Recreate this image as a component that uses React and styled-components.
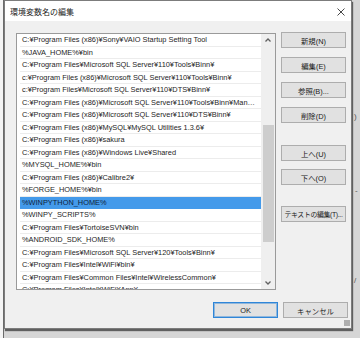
import React from "react";
import styled, { createGlobalStyle } from "styled-components";

const Global = createGlobalStyle`
  html, body { margin: 0; padding: 0; }
  body { background: #e4e4e4; font-family: "Liberation Sans", "Noto Sans CJK JP", sans-serif; }
`;

const Desktop = styled.div`
  position: relative;
  width: 360px;
  height: 338px;
  overflow: hidden;
  background: linear-gradient(90deg, #f4f4f4 0, #f4f4f4 3px, #6a6a6a 3px, #6a6a6a 4px, #d6d6d6 4px);
  display: flex;
  align-items: flex-start;
  padding-left: 4px;
  box-sizing: border-box;
`;

const Fragment = styled.span`
  position: absolute;
  left: ${(p) => p.$x}px;
  top: ${(p) => p.$y}px;
  font-size: 8px;
  color: #555;
`;

const Dialog = styled.div`
  width: 348px;
  height: 329px;
  box-sizing: border-box;
  border: 1px solid #7c7c7c;
  background: #f0f0f0;
  display: flex;
  flex-direction: column;
  box-shadow: 1px 2px 1px rgba(0, 0, 0, 0.55);
`;

const TitleBar = styled.div`
  height: 20px;
  background: #ffffff;
  display: flex;
  align-items: center;
  justify-content: space-between;
  padding: 0 6px 0 5px;
  flex-shrink: 0;
`;

const Title = styled.span`
  font-family: "Noto Sans CJK JP", sans-serif;
  font-size: 8px;
  color: #222;
`;

const Close = styled.span`
  display: flex;
  width: 9px;
  height: 9px;
  align-items: center;
  justify-content: center;
  margin-top: 1px;
`;

const Body = styled.div`
  flex: 1;
  display: flex;
  flex-direction: column;
  padding: 12px 3px 0 11px;
`;

const Main = styled.div`
  display: flex;
  gap: 5px;
  align-items: flex-start;
`;

const ListBox = styled.div`
  width: 260px;
  height: 257px;
  box-sizing: border-box;
  border: 1px solid #9a9a9a;
  background: #ffffff;
  display: flex;
  overflow: hidden;
`;

const Rows = styled.div`
  flex: 1;
  min-width: 0;
  display: flex;
  flex-direction: column;
`;

const Row = styled.div`
  height: 12.5px;
  flex-shrink: 0;
  box-sizing: border-box;
  margin-left: 3px;
  padding: 0 4px 0 2px;
  font-size: 7.4px;
  line-height: 12px;
  color: ${(p) => (p.$sel ? "#0f1f3a" : "#1e1e1e")};
  background: ${(p) => (p.$sel ? "#449aea" : "transparent")};
  border-bottom: 1px solid ${(p) => (p.$sel ? "#449aea" : "#ececec")};
  white-space: nowrap;
  overflow: hidden;
  text-overflow: ellipsis;
`;

const ScrollBar = styled.div`
  width: 14px;
  flex-shrink: 0;
  background: #efefef;
  display: flex;
  flex-direction: column;
`;

const Arrow = styled.div`
  height: 12px;
  display: flex;
  align-items: center;
  justify-content: center;
  flex-shrink: 0;
`;

const Track = styled.div`
  flex: 1;
  display: flex;
  flex-direction: column;
  align-items: center;
`;

const Thumb = styled.div`
  width: 11px;
  flex-shrink: 0;
  background: #cdcdcd;
`;

const ButtonCol = styled.div`
  width: 65px;
  display: flex;
  flex-direction: column;
  margin-top: -1px;
`;

const Button = styled.button`
  width: 65px;
  height: 16px;
  box-sizing: border-box;
  margin: ${(p) => p.$mt || 0}px 0 0 0;
  padding: 0;
  background: #e1e1e1;
  border: 1px solid ${(p) => (p.$default ? "#2f86d8" : "#adadad")};
  box-shadow: ${(p) => (p.$default ? "inset 0 0 0 1px rgba(47,134,216,0.45)" : "none")};
  font-family: "Liberation Sans", "Noto Sans CJK JP", sans-serif;
  font-size: ${(p) => (p.$tight ? 6.9 : 7.4)}px;
  letter-spacing: ${(p) => (p.$tight ? -0.35 : 0)}px;
  color: #222;
  white-space: nowrap;
  display: flex;
  align-items: center;
  justify-content: center;
  flex-shrink: 0;
`;

const Footer = styled.div`
  display: flex;
  justify-content: flex-end;
  gap: 5px;
  margin-top: 12px;
`;

const Grip = styled.div`
  position: absolute;
  left: 344px;
  top: 320px;
  width: 6px;
  height: 6px;
  background-image: radial-gradient(#aaa 0.7px, transparent 0.8px);
  background-size: 2px 2px;
`;

const rows = [
  "C:¥Program Files (x86)¥Sony¥VAIO Startup Setting Tool",
  "%JAVA_HOME%¥bin",
  "C:¥Program Files¥Microsoft SQL Server¥110¥Tools¥Binn¥",
  "c:¥Program Files (x86)¥Microsoft SQL Server¥110¥Tools¥Binn¥",
  "c:¥Program Files¥Microsoft SQL Server¥110¥DTS¥Binn¥",
  "C:¥Program Files (x86)¥Microsoft SQL Server¥110¥Tools¥Binn¥ManagementStudio¥",
  "C:¥Program Files (x86)¥Microsoft SQL Server¥110¥DTS¥Binn¥",
  "C:¥Program Files (x86)¥MySQL¥MySQL Utilities 1.3.6¥",
  "C:¥Program Files (x86)¥sakura",
  "C:¥Program Files (x86)¥Windows Live¥Shared",
  "%MYSQL_HOME%¥bin",
  "C:¥Program Files (x86)¥Calibre2¥",
  "%FORGE_HOME%¥bin",
  "%WINPYTHON_HOME%",
  "%WINPY_SCRIPTS%",
  "C:¥Program Files¥TortoiseSVN¥bin",
  "%ANDROID_SDK_HOME%",
  "C:¥Program Files¥Microsoft SQL Server¥120¥Tools¥Binn¥",
  "C:¥Program Files¥Intel¥WiFi¥bin¥",
  "C:¥Program Files¥Common Files¥Intel¥WirelessCommon¥",
  "C:¥Program Files¥Intel¥WiFi¥App¥",
];

const sideButtons = [
  { label: "新規(N)", mt: 0 },
  { label: "編集(E)", mt: 9 },
  { label: "参照(B)...", mt: 9 },
  { label: "削除(D)", mt: 9 },
  { label: "上へ(U)", mt: 22 },
  { label: "下へ(O)", mt: 8 },
  { label: "テキストの編集(T)...", mt: 21, tight: true },
];

const Chevron = ({ up }) => (
  <svg width="6" height="4" viewBox="0 0 6 4">
    <path
      d={up ? "M0.5 3.5 L3 1 L5.5 3.5" : "M0.5 0.5 L3 3 L5.5 0.5"}
      fill="none"
      stroke="#606060"
      strokeWidth="1.3"
    />
  </svg>
);

export default function App() {
  return (
    <>
      <Global />
      <Desktop>
        <Dialog>
          <TitleBar>
            <Title>環境変数名の編集</Title>
            <Close>
              <svg width="8" height="8" viewBox="0 0 8 8">
                <path d="M0.5 0.5 L7.5 7.5 M7.5 0.5 L0.5 7.5" stroke="#333" strokeWidth="0.9" />
              </svg>
            </Close>
          </TitleBar>
          <Body>
            <Main>
              <ListBox>
                <Rows>
                  {rows.map((r, i) => (
                    <Row key={i} $sel={i === 13}>
                      {r}
                    </Row>
                  ))}
                </Rows>
                <ScrollBar>
                  <Arrow>
                    <Chevron up />
                  </Arrow>
                  <Track>
                    <Thumb style={{ marginTop: 79, height: 117 }} />
                  </Track>
                  <Arrow>
                    <Chevron />
                  </Arrow>
                </ScrollBar>
              </ListBox>
              <ButtonCol>
                {sideButtons.map((b) => (
                  <Button key={b.label} $mt={b.mt} $tight={b.tight}>
                    {b.label}
                  </Button>
                ))}
              </ButtonCol>
            </Main>
            <Footer>
              <Button $default>OK</Button>
              <Button>キャンセル</Button>
            </Footer>
          </Body>
        </Dialog>
        <Grip />
        <Fragment $x={354} $y={112}>)</Fragment>
        <Fragment $x={355} $y={186}>-</Fragment>
        <Fragment $x={354} $y={276}>/</Fragment>
      </Desktop>
    </>
  );
}
